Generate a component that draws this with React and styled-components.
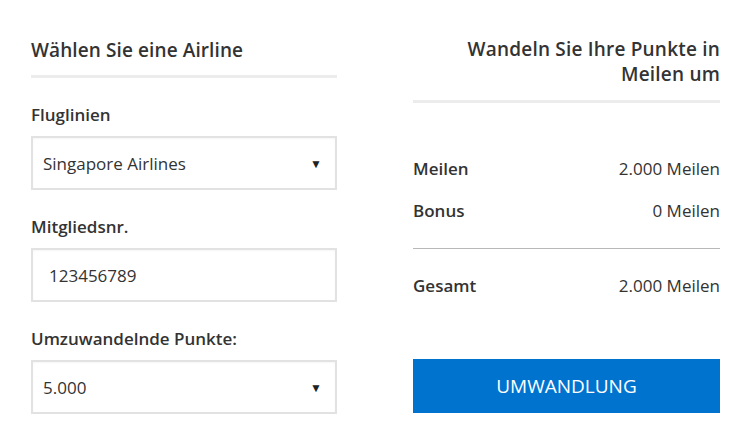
import React from "react";
import styled, { createGlobalStyle } from "styled-components";

const Global = createGlobalStyle`
  html, body { margin: 0; padding: 0; background: #fff; }
  body { font-family: "Open Sans", "Noto Sans", sans-serif; color: #333; }
`;

const Page = styled.div`
  width: 750px;
  height: 430px;
  box-sizing: border-box;
  padding: 37px 30px 0 31px;
  display: grid;
  grid-template-columns: 306px 307px;
  column-gap: 76px;
`;

const Column = styled.section`
  display: flex;
  flex-direction: column;
`;

const Title = styled.h2`
  margin: 0;
  font-size: 19px;
  font-weight: 600;
  line-height: ${(p) => p.$lh}px;
  letter-spacing: ${(p) => (p.$right ? "0.2px" : "0.1px")};
  color: #333;
  text-align: ${(p) => (p.$right ? "right" : "left")};
  padding-bottom: ${(p) => p.$pb}px;
  border-bottom: 3px solid #ececec;
`;

const Label = styled.label`
  display: block;
  font-size: 17px;
  font-weight: 600;
  line-height: 24px;
  color: #333;
  margin-top: 25px;
  margin-bottom: 9px;
`;

const Field = styled.div`
  box-sizing: border-box;
  height: 54px;
  border: 2px solid #e2e2e2;
  box-shadow: inset 0 1px 2px rgba(0, 0, 0, 0.04);
  display: flex;
  align-items: center;
  justify-content: space-between;
  padding: 0 13px 0 ${(p) => p.$pl}px;
  font-size: 17px;
  color: #333;
`;

const Arrow = styled.span`
  font-size: 12px;
  color: #222;
`;

const Rows = styled.div`
  margin-top: 54px;
  display: flex;
  flex-direction: column;
`;

const Row = styled.div`
  display: flex;
  justify-content: space-between;
  font-size: 17px;
  line-height: 24px;
  height: 24px;
  margin-bottom: ${(p) => p.$mb}px;
`;

const RowLabel = styled.span`
  font-weight: 600;
`;

const RowValue = styled.span`
  font-weight: 400;
`;

const Rule = styled.hr`
  border: 0;
  border-top: 1px solid #b8b8b8;
  margin: 0 0 25px;
`;

const Button = styled.button`
  margin-top: 61px;
  height: 54px;
  border: 0;
  background: #0073cf;
  color: #fff;
  font-family: inherit;
  font-size: 19px;
  font-weight: 400;
  padding: 0;
`;

export default function App() {
  return (
    <>
      <Global />
      <Page>
        <Column>
          <Title $lh={26} $pb={12}>Wählen Sie eine Airline</Title>
          <Label>Fluglinien</Label>
          <Field $pl={10}>
            <span>Singapore Airlines</span>
            <Arrow>▼</Arrow>
          </Field>
          <Label>Mitgliedsnr.</Label>
          <Field $pl={16}>
            <span>123456789</span>
          </Field>
          <Label>Umzuwandelnde Punkte:</Label>
          <Field $pl={10}>
            <span>5.000</span>
            <Arrow>▼</Arrow>
          </Field>
        </Column>
        <Column>
          <Title $right $lh={25} $pb={13}>
            Wandeln Sie Ihre Punkte in
            <br />
            Meilen um
          </Title>
          <Rows>
            <Row $mb={18}>
              <RowLabel>Meilen</RowLabel>
              <RowValue>2.000 Meilen</RowValue>
            </Row>
            <Row $mb={25}>
              <RowLabel>Bonus</RowLabel>
              <RowValue>0 Meilen</RowValue>
            </Row>
            <Rule />
            <Row $mb={0}>
              <RowLabel>Gesamt</RowLabel>
              <RowValue>2.000 Meilen</RowValue>
            </Row>
          </Rows>
          <Button>UMWANDLUNG</Button>
        </Column>
      </Page>
    </>
  );
}
